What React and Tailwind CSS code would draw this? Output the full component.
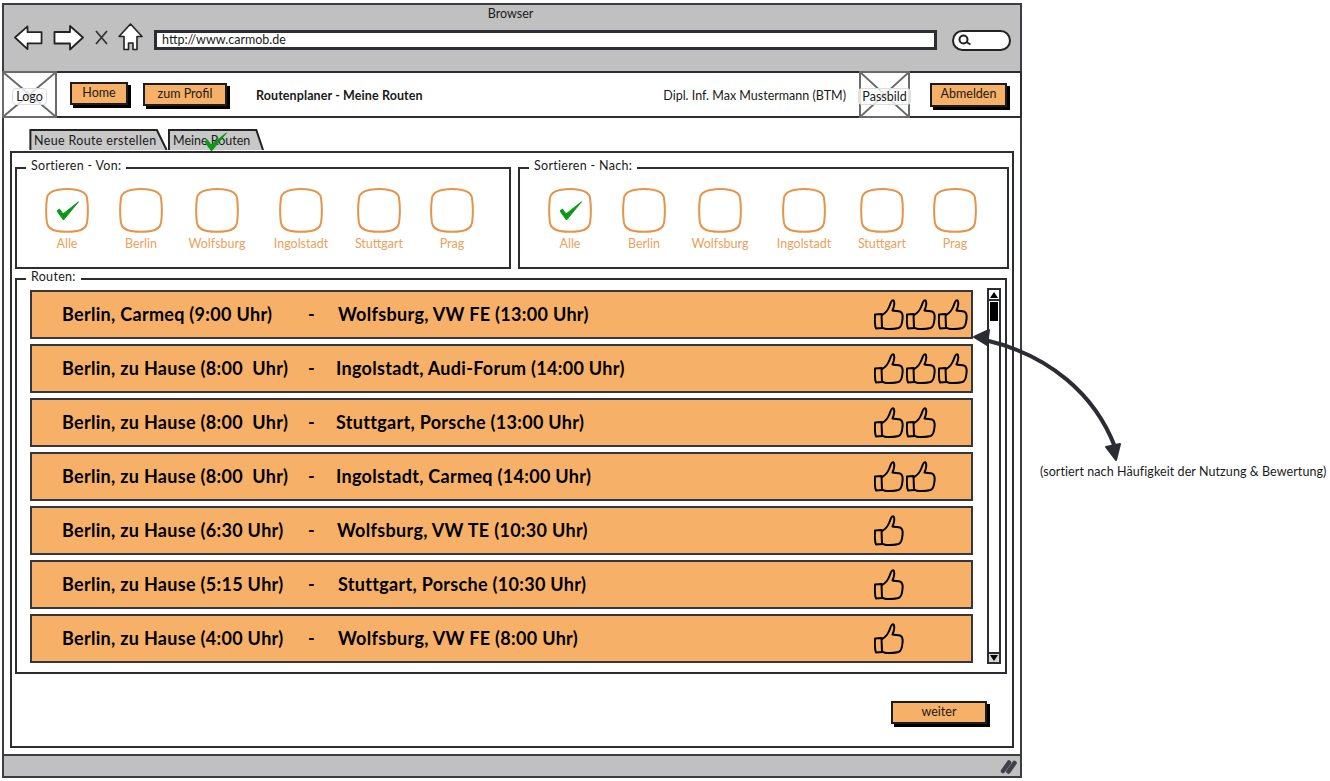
import React from 'react'

const FONT = "font-['Lato','Open_Sans',sans-serif]"

const CITIES = [
  { name: 'Alle', checked: true },
  { name: 'Berlin' },
  { name: 'Wolfsburg' },
  { name: 'Ingolstadt' },
  { name: 'Stuttgart' },
  { name: 'Prag' },
]

const ROUTES = [
  { from: 'Berlin, Carmeq (9:00 Uhr)', to: 'Wolfsburg, VW FE (13:00 Uhr)', likes: 3, toClass: 'ml-px' },
  { from: 'Berlin, zu Hause (8:00  Uhr)', to: 'Ingolstadt, Audi-Forum (14:00 Uhr)', likes: 3, toClass: '-ml-px' },
  { from: 'Berlin, zu Hause (8:00  Uhr)', to: 'Stuttgart, Porsche (13:00 Uhr)', likes: 2, toClass: '-ml-px' },
  { from: 'Berlin, zu Hause (8:00  Uhr)', to: 'Ingolstadt, Carmeq (14:00 Uhr)', likes: 2, toClass: '-ml-px' },
  { from: 'Berlin, zu Hause (6:30 Uhr)', to: 'Wolfsburg, VW TE (10:30 Uhr)', likes: 1, toClass: '' },
  { from: 'Berlin, zu Hause (5:15 Uhr)', to: 'Stuttgart, Porsche (10:30 Uhr)', likes: 1, toClass: 'ml-px' },
  { from: 'Berlin, zu Hause (4:00 Uhr)', to: 'Wolfsburg, VW FE (8:00 Uhr)', likes: 1, toClass: 'ml-px' },
]

function Thumb() {
  return (
    <svg width="30" height="31" viewBox="0 0 30 31" fill="none" stroke="#000" strokeWidth="2" strokeLinejoin="round" strokeLinecap="round">
      <path d="M1 15.5 L7.5 15 L8 29 L2 29.5 C1 27 0.8 19 1 15.5 Z" />
      <path d="M8 16 C11 14.5 14 11 15.5 7 C16.5 4 17.5 0.8 19 1.2 C21 2 20.5 7 18.5 11.5 C21 12 24 12 26 12.5 C28.5 13.5 29 16 28.5 20 C28.2 24 27 28 24.5 29 C20 30 14 30.2 11 29.7 C9.5 29.5 8.5 29 8 28" />
    </svg>
  )
}

function Check({ className }) {
  return (
    <svg className={className} viewBox="0 0 24 20" fill="none">
      <path d="M1 10 L3.5 8 L7 13 L22.5 0.8 L7.5 19 Z" fill="#0a9a16" stroke="#0a9a16" strokeWidth="1" strokeLinejoin="round" />
    </svg>
  )
}

function Btn({ children, className }) {
  return (
    <div className={`flex items-center justify-center bg-[#f6b067] border-2 border-[#1c1c1f] shadow-[3px_3px_0_#000] text-[12.5px] text-[#1a1a1a] ${className}`}>
      {children}
    </div>
  )
}

function ImagePlaceholder({ label, className }) {
  return (
    <div className={`relative flex items-center justify-center shrink-0 border-2 border-[#6a6a6a] bg-white ${className}`}>
      <svg className="absolute inset-0 w-full h-full" preserveAspectRatio="none" viewBox="0 0 50 42" stroke="#6a6a6a" strokeWidth="2">
        <path d="M0 0 L50 42 M50 0 L0 42" vectorEffect="non-scaling-stroke" />
      </svg>
      <span className="relative mt-[3px] bg-white/80 border border-[#dcdcdc] rounded-[4px] px-[3px] text-[12.5px] leading-[15px] text-[#1a1a1a]">{label}</span>
    </div>
  )
}

function CityOption({ name, checked }) {
  return (
    <div className="flex flex-col items-center">
      <div className="relative w-[44px] h-[45px] flex items-center justify-center pl-[2px]">
        <svg className="absolute inset-0" width="44" height="45" viewBox="0 0 44 45" fill="none" stroke="#e5954a" strokeWidth="2">
          <path d="M12 2 C18 1 27 1 32 2 C38 3 41 5 42 10 C43 17 43 28 42 35 C41 40 38 42 32 43 C26 44 18 44 12 43 C6 42 3 40 2 35 C1 28 1 17 2 10 C3 5 6 3 12 2 Z" />
        </svg>
        {checked && <Check className="relative w-[24px] h-[20px]" />}
      </div>
      <span className="mt-[3px] text-[12.5px] leading-[16px] text-[#e9a25c]">{name}</span>
    </div>
  )
}

function Legend({ children }) {
  return (
    <legend className="ml-[9px] px-[5px] text-[12.5px] tracking-[0.3px] leading-[18px] text-[#1a1a1a]">
      <span className="block -translate-y-[2px]">{children}</span>
    </legend>
  )
}

function SortBox({ title, className }) {
  return (
    <fieldset className={`border-2 border-[#2b2d33] h-[110px] ${className}`}>
      <Legend>{title}</Legend>
      <div className="grid grid-cols-[74px_74px_78px_90px_66px_80px] ml-[13px] mt-[11px]">
        {CITIES.map((c) => <CityOption key={c.name} {...c} />)}
      </div>
    </fieldset>
  )
}

function RouteRow({ from, to, likes, toClass }) {
  return (
    <div className="flex items-center h-[49px] bg-[#f6b067] border-2 border-[#33363c] pl-[30px] text-[18px] tracking-[0.3px] font-bold text-black whitespace-pre">
      <span className="w-[246px]">{from}</span>
      <span className="w-[29px]">-</span>
      <span className={toClass}>{to}</span>
      <div className="ml-auto w-[97px] flex gap-[2px]">
        {Array.from({ length: likes }).map((_, i) => <Thumb key={i} />)}
      </div>
    </div>
  )
}

function Scrollbar() {
  return (
    <div className="w-[14px] h-[376px] -mt-[2px] border-2 border-[#2b2d33] flex flex-col bg-white">
      <div className="h-[11px] flex items-center justify-center border-b-2 border-[#2b2d33]">
        <div className="w-0 h-0 border-x-[4px] border-x-transparent border-b-[6px] border-b-black" />
      </div>
      <div className="mx-auto mt-[1px] w-[8px] h-[19px] bg-black" />
      <div className="mt-auto h-[10px] flex items-center justify-center border-t-2 border-[#2b2d33] bg-[#d8d8d8]">
        <div className="w-0 h-0 border-x-[4px] border-x-transparent border-t-[6px] border-t-black" />
      </div>
    </div>
  )
}

function BrowserBar() {
  return (
    <div className="h-[66px] bg-[#c0c0c0] flex flex-col">
      <div className="text-center text-[12.5px] leading-[16px] pt-[1px] pr-[3px] text-[#1a1a1a]">Browser</div>
      <div className="flex items-center h-[32px] mt-[2px] pl-[10px]">
        <svg className="-mt-[6px]" width="29" height="27" viewBox="0 0 30 27" fill="#fff" stroke="#222" strokeWidth="1.8" strokeLinejoin="round">
          <path d="M1 13.5 L14 2 L14 8 L28.5 8 L28.5 19.5 L14 19.5 L14 25.5 Z" />
        </svg>
        <svg className="ml-[10px] -mt-[6px]" width="31" height="27" viewBox="0 0 31 27" fill="#fff" stroke="#222" strokeWidth="1.8" strokeLinejoin="round">
          <path d="M30 13.5 L17 2 L17 8 L1.5 8 L1.5 19.5 L17 19.5 L17 25.5 Z" />
        </svg>
        <svg className="ml-[11px] -mt-[6px]" width="13" height="15" viewBox="0 0 13 15" fill="none" stroke="#333" strokeWidth="1.8">
          <path d="M1 1 L12 14 M12 1 L1 14" />
        </svg>
        <svg className="ml-[10px] -mt-[6px]" width="25" height="28" viewBox="0 0 25 28" fill="#fff" stroke="#222" strokeWidth="1.6" strokeLinejoin="round">
          <path d="M12.5 1 L24 13.5 L19 13.5 L19 26.5 L15 26.5 L15 20 L10.5 20 L10.5 26.5 L6 26.5 L6 13.5 L1 13.5 Z" />
        </svg>
        <div className="ml-[11px] w-[783px] h-[20px] bg-white border-[3px] border-[#2b2d33] flex items-center pl-[5px] text-[12.5px] text-[#1a1a1a]">
          http://www.carmob.de
        </div>
        <div className="ml-[15px] w-[59px] h-[21px] rounded-full bg-white border-2 border-[#222] flex items-center pl-[4px]">
          <svg width="13" height="12" viewBox="0 0 13 12" fill="none" stroke="#222" strokeWidth="2">
            <circle cx="5.5" cy="5.5" r="4" />
            <path d="M8.5 8 L12.5 10.5" />
          </svg>
        </div>
      </div>
    </div>
  )
}

function Header() {
  return (
    <div className="-mx-[2px] h-[47px] flex items-center border-y-2 border-[#2b2d33] border-r-2 bg-white text-[12.5px] text-[#1a1a1a]">
      <ImagePlaceholder label="Logo" className="w-[55px] h-[47px]" />
      <Btn className="ml-[13px] -mt-[2px] w-[58px] h-[23px]">Home</Btn>
      <Btn className="ml-[15px] w-[84px] h-[23px]">zum Profil</Btn>
      <span className="ml-[29px] mt-[3px] font-bold tracking-[0.1px]">Routenplaner - Meine Routen</span>
      <span className="ml-auto mt-[3px]">Dipl. Inf. Max Mustermann (BTM)</span>
      <ImagePlaceholder label="Passbild" className="ml-[13px] w-[51px] h-[47px]" />
      <Btn className="ml-[20px] mr-[13px] w-[77px] h-[24px]">Abmelden</Btn>
    </div>
  )
}

function Tab({ label, className, labelClass, check }) {
  return (
    <div className={`relative h-[21px] text-[12.5px] leading-[23px] text-[#1a1a1a] ${className}`}>
      <svg className="absolute inset-0 w-full h-full" preserveAspectRatio="none" viewBox="0 0 100 21" fill="#c8c8c8" stroke="#222" strokeWidth="2">
        <path d="M1 21 L1 1 L92 1 L99 21" vectorEffect="non-scaling-stroke" />
      </svg>
      <span className={`relative pl-[5px] ${labelClass}`}>{label}</span>
      {check && <Check className="absolute left-[36px] top-[3px] w-[24px] h-[20px]" />}
    </div>
  )
}

export default function App() {
  return (
    <div className={`relative w-[1330px] h-[781px] bg-white overflow-hidden ${FONT}`}>
      <div className="ml-[2px] mt-[3px] w-[1020px] h-[775px] border-2 border-[#3a3c42] flex flex-col">
        <BrowserBar />
        <Header />

        <div className="flex-1 flex flex-col">
          <div className="flex pl-[25px] pt-[11px]">
            <Tab label="Neue Route erstellen" className="w-[139px]" labelClass="tracking-[0.35px]" />
            <Tab label="Meine Routen" className="w-[96px]" labelClass="" check />
          </div>

          <div className="ml-[6px] mt-[1px] w-[1004px] h-[597px] border-2 border-[#2b2d33] pl-[3px] pt-[6px]">
            <div className="flex">
              <SortBox title="Sortieren - Von:" className="w-[496px]" />
              <SortBox title="Sortieren - Nach:" className="ml-[7px] w-[491px]" />
            </div>

            <fieldset className="mt-[1px] w-[992px] h-[404px] border-2 border-[#2b2d33]">
              <Legend>Routen:</Legend>
              <div className="flex mt-[2px] pl-[13px]">
                <div className="w-[943px] flex flex-col gap-[5px]">
                  {ROUTES.map((r, i) => <RouteRow key={i} {...r} />)}
                </div>
                <div className="ml-[14px]">
                  <Scrollbar />
                </div>
              </div>
            </fieldset>

            <div className="flex justify-end mt-[27px] pr-[25px]">
              <Btn className="w-[96px] h-[23px]">weiter</Btn>
            </div>
          </div>
        </div>

        <div className="h-[22px] mt-[6px] border-t-2 border-[#3a3c42] bg-[#c0c0c0] flex items-center justify-end pr-[3px]">
          <svg width="17" height="15" viewBox="0 0 17 15" fill="none" stroke="#3f4148" strokeWidth="4.5" strokeLinecap="round">
            <path d="M3 12 L9 3.5 M8.5 12.5 L14.5 4" />
          </svg>
        </div>
      </div>

      {/* annotation over the page: arrow and note */}
      <svg className="absolute inset-0 pointer-events-none" width="1330" height="781" fill="none">
        <path d="M985 340 C1050 355 1095 395 1115 447" stroke="#2b2d33" strokeWidth="4" />
        <path d="M974 337 L989 330 L987 345 Z" fill="#2b2d33" stroke="#2b2d33" strokeWidth="2" strokeLinejoin="round" />
        <path d="M1116 460 L1106 447 L1120 444 Z" fill="#2b2d33" stroke="#2b2d33" strokeWidth="2" strokeLinejoin="round" />
      </svg>
      <div className="absolute left-[1040px] top-[464px] text-[12.5px] tracking-[0.08px] leading-[15px] whitespace-nowrap text-[#1a1a1a]">
        (sortiert nach Häufigkeit der Nutzung &amp; Bewertung)
      </div>
    </div>
  )
}
